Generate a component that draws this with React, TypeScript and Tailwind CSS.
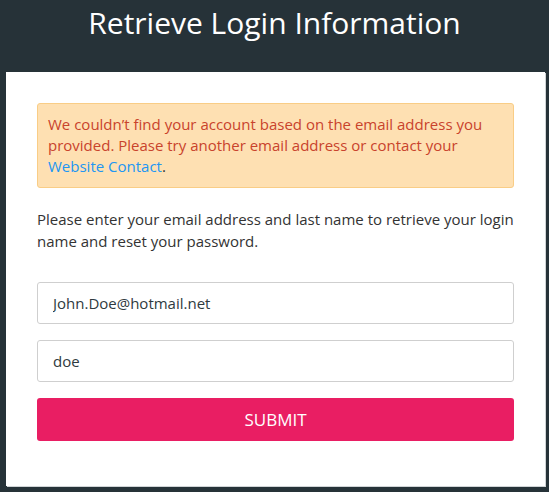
export default function App() {
  return (
    <div className="min-h-[492px] bg-[#263238] font-['Open_Sans',sans-serif] pb-[6px]">
      <h1 className="h-[72px] pt-[3px] text-center text-[30px] leading-[40px] text-white">
        Retrieve Login Information
      </h1>

      <div className="ml-[6px] w-[539px] bg-white px-[31px] pt-[31px] pb-[45px] shadow-[1px_1px_0_#d0d4d6]">
        <div className="rounded-[3px] border border-[#f9cd86] bg-[#fee0b2] px-[10px] py-[10px] text-[15px] leading-[21px] text-[#c9432c]">
          We couldn’t find your account based on the email address you provided. Please try another
          email address or contact your{' '}
          <a href="#" className="text-[#2196f3]">
            Website Contact
          </a>
          <span className="text-[#333]">.</span>
        </div>

        <p className="mt-[20px] text-[15px] leading-[22px] text-[#333]">
          Please enter your email address and last name to retrieve your login name and reset your
          password.
        </p>

        <form className="mt-[30px] flex flex-col gap-4" onSubmit={(e) => e.preventDefault()}>
          <input
            defaultValue="John.Doe@hotmail.net"
            className="h-[42px] w-full rounded-[3px] border border-[#cfcfcf] px-[15px] text-[15px] text-[#2f3a40] outline-none"
          />
          <input
            defaultValue="doe"
            className="h-[42px] w-full rounded-[3px] border border-[#cfcfcf] px-[15px] text-[15px] text-[#2f3a40] outline-none"
          />
          <button
            type="submit"
            className="h-[43px] w-full rounded-[3px] bg-[#e91e63] text-[17px] uppercase text-white"
          >
            Submit
          </button>
        </form>
      </div>
    </div>
  );
}
